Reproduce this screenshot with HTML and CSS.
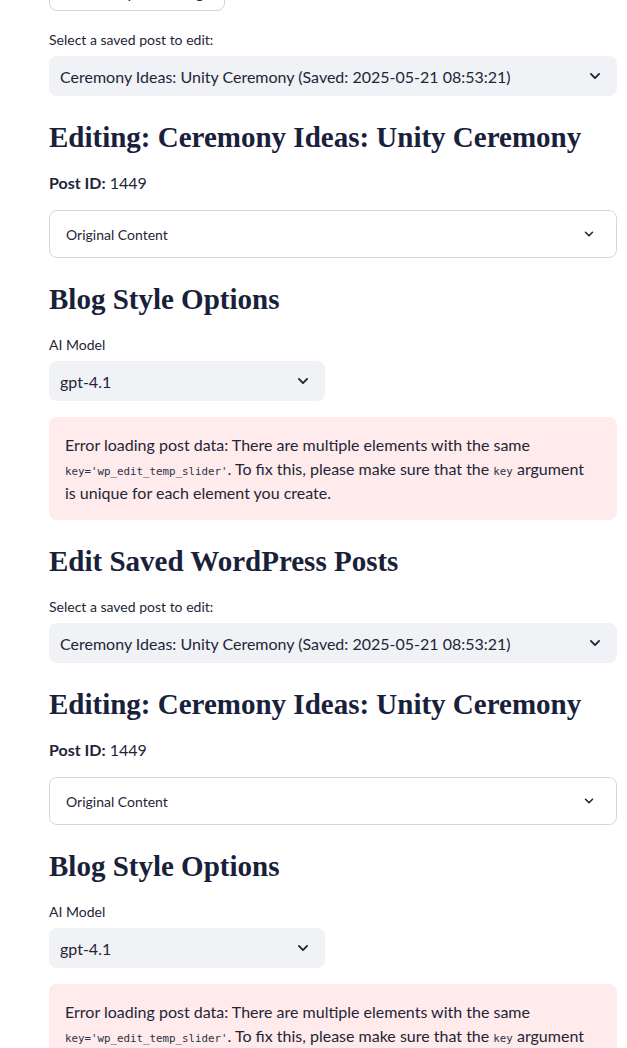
FILE: index.html
```html
<!DOCTYPE html>
<html lang="en">
<head>
<meta charset="utf-8">
<title>Edit Saved WordPress Posts</title>
<link rel="stylesheet" href="styles.css">
</head>
<body>
<main class="page">
  <div class="stack">
    <button class="btn" type="button">Refresh post listing</button>

    <div class="field">
      <label class="label">Select a saved post to edit:</label>
      <div class="select select-wide">
        <span class="select-value">Ceremony Ideas: Unity Ceremony (Saved: 2025-05-21 08:53:21)</span>
        <svg class="chev" viewBox="0 0 24 24" width="14" height="14"><path d="M5 8.5l7 7 7-7" fill="none" stroke="currentColor" stroke-width="3.2" stroke-linecap="round" stroke-linejoin="round"/></svg>
      </div>
    </div>

    <h2 class="heading">Editing: Ceremony Ideas: Unity Ceremony</h2>
    <p class="meta"><strong>Post ID:</strong> 1449</p>

    <div class="expander">
      <span>Original Content</span>
      <svg class="chev chev-sm" viewBox="0 0 24 24" width="12" height="12"><path d="M5 8.5l7 7 7-7" fill="none" stroke="currentColor" stroke-width="3.2" stroke-linecap="round" stroke-linejoin="round"/></svg>
    </div>

    <h2 class="heading">Blog Style Options</h2>

    <div class="field">
      <label class="label">AI Model</label>
      <div class="select select-narrow">
        <span class="select-value">gpt-4.1</span>
        <svg class="chev" viewBox="0 0 24 24" width="14" height="14"><path d="M5 8.5l7 7 7-7" fill="none" stroke="currentColor" stroke-width="3.2" stroke-linecap="round" stroke-linejoin="round"/></svg>
      </div>
    </div>

    <div class="alert">
      Error loading post data: There are multiple elements with the same <code>key='wp_edit_temp_slider'</code>. To fix this, please make sure that the <code>key</code> argument is unique for each element you create.
    </div>

    <h2 class="heading">Edit Saved WordPress Posts</h2>

    <div class="field">
      <label class="label">Select a saved post to edit:</label>
      <div class="select select-wide">
        <span class="select-value">Ceremony Ideas: Unity Ceremony (Saved: 2025-05-21 08:53:21)</span>
        <svg class="chev" viewBox="0 0 24 24" width="14" height="14"><path d="M5 8.5l7 7 7-7" fill="none" stroke="currentColor" stroke-width="3.2" stroke-linecap="round" stroke-linejoin="round"/></svg>
      </div>
    </div>

    <h2 class="heading">Editing: Ceremony Ideas: Unity Ceremony</h2>
    <p class="meta"><strong>Post ID:</strong> 1449</p>

    <div class="expander">
      <span>Original Content</span>
      <svg class="chev chev-sm" viewBox="0 0 24 24" width="12" height="12"><path d="M5 8.5l7 7 7-7" fill="none" stroke="currentColor" stroke-width="3.2" stroke-linecap="round" stroke-linejoin="round"/></svg>
    </div>

    <h2 class="heading">Blog Style Options</h2>

    <div class="field">
      <label class="label">AI Model</label>
      <div class="select select-narrow">
        <span class="select-value">gpt-4.1</span>
        <svg class="chev" viewBox="0 0 24 24" width="14" height="14"><path d="M5 8.5l7 7 7-7" fill="none" stroke="currentColor" stroke-width="3.2" stroke-linecap="round" stroke-linejoin="round"/></svg>
      </div>
    </div>

    <div class="alert">
      Error loading post data: There are multiple elements with the same <code>key='wp_edit_temp_slider'</code>. To fix this, please make sure that the <code>key</code> argument is unique for each element you create.
    </div>
  </div>
</main>
</body>
</html>
```

FILE: styles.css
```css
html, body {
  margin: 0;
  padding: 0;
  background: #ffffff;
  overflow: hidden;
}

body {
  font-family: Lato, "Noto Sans", sans-serif;
  color: #1e2638;
  font-size: 16px;
}

.page {
  width: 568px;
  padding-left: 49px;
  margin-top: -29px;
}

.stack {
  display: flex;
  flex-direction: column;
  gap: 16px;
}

.btn {
  align-self: flex-start;
  width: 176px;
  height: 40px;
  background: #ffffff;
  border: 1px solid #d3d4d8;
  border-radius: 8px;
  font-family: Lato, sans-serif;
  font-size: 16px;
  color: #1e2638;
  padding: 0 12px;
}

.field {
  display: flex;
  flex-direction: column;
}

.label {
  display: flex;
  align-items: center;
  height: 24px;
  margin-bottom: 5px;
  font-size: 14px;
  color: #1e2638;
}

.select {
  display: flex;
  align-items: center;
  justify-content: space-between;
  height: 40px;
  box-sizing: border-box;
  background: #f0f2f6;
  border-radius: 8px;
  padding: 0 15px 0 11px;
  font-size: 16px;
  color: #1e2638;
}

.select-wide {
  width: 568px;
}

.select-narrow {
  width: 276px;
}

.chev {
  color: #1e2638;
  flex: none;
}

.heading {
  margin: 0;
  height: 42px;
  box-sizing: border-box;
  padding-top: 9px;
  font-family: "Liberation Serif", "DejaVu Serif", serif;
  font-weight: 700;
  font-size: 29px;
  line-height: 33px;
  color: #19213a;
  white-space: nowrap;
}

.meta {
  margin: 0;
  height: 24px;
  line-height: 24px;
  font-size: 16px;
  padding-top: 1px;
  box-sizing: border-box;
}

.meta strong {
  font-weight: 700;
}

.expander {
  display: flex;
  align-items: center;
  justify-content: space-between;
  height: 48px;
  box-sizing: border-box;
  border: 1px solid #d6d7db;
  border-radius: 8px;
  padding: 0 21px 0 16px;
  font-size: 14px;
}

.alert {
  background: #ffebeb;
  border-radius: 8px;
  padding: 16px 24px 16px 16px;
  height: 103px;
  box-sizing: border-box;
  font-size: 16px;
  line-height: 24px;
  color: #1e2638;
}

.alert code {
  font-family: "DejaVu Sans Mono", "Liberation Mono", monospace;
  font-size: 10.8px;
  line-height: 12px;
  color: #2a3348;
}
```
